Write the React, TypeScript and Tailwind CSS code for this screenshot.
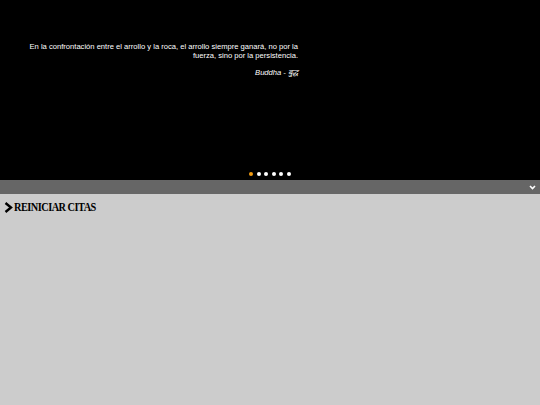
import React from "react";

export default function App() {
  const dots = [0, 1, 2, 3, 4, 5];
  return (
    <div className="w-[540px] h-[405px] bg-[#cccccc] flex flex-col" style={{ fontFamily: '"Liberation Sans", Arial, sans-serif' }}>
      <div className="h-[180px] bg-black flex flex-col">
        <div className="pt-[42px] pl-[10px] w-[298px] text-white text-right text-[7.6px] leading-[9px]">
          <p>En la confrontación entre el arrollo y la roca, el arrollo siempre ganará, no por la<br />fuerza, sino por la persistencia.</p>
          <p className="mt-[8px] italic">Buddha - बुद्ध</p>
        </div>
        <div className="mt-auto mb-[4px] flex justify-center gap-[3.6px]">
          {dots.map((i) => (
            <span key={i} className={"w-[4px] h-[4px] rounded-full " + (i === 0 ? "bg-[#f39c12]" : "bg-white")} />
          ))}
        </div>
      </div>
      <div className="h-[14px] bg-[#666666] flex items-center justify-end pr-[4px]">
        <svg width="7" height="5" viewBox="0 0 7 5">
          <path d="M1 1 L3.5 3.5 L6 1" stroke="white" strokeWidth="1.6" fill="none" />
        </svg>
      </div>
      <div className="flex items-center pl-[4px] pt-[6px]" style={{ fontFamily: '"Liberation Serif", "Times New Roman", serif' }}>
        <svg width="9" height="11" viewBox="0 0 9 11" className="mr-[1px]">
          <path d="M1.5 1 L7 5.5 L1.5 10" stroke="black" strokeWidth="2.4" fill="none" />
        </svg>
        <span className="inline-block origin-left scale-x-[0.86] text-[12px] font-bold text-black tracking-[-0.6px] leading-[14px]">REINICIAR CITAS</span>
      </div>
    </div>
  );
}
